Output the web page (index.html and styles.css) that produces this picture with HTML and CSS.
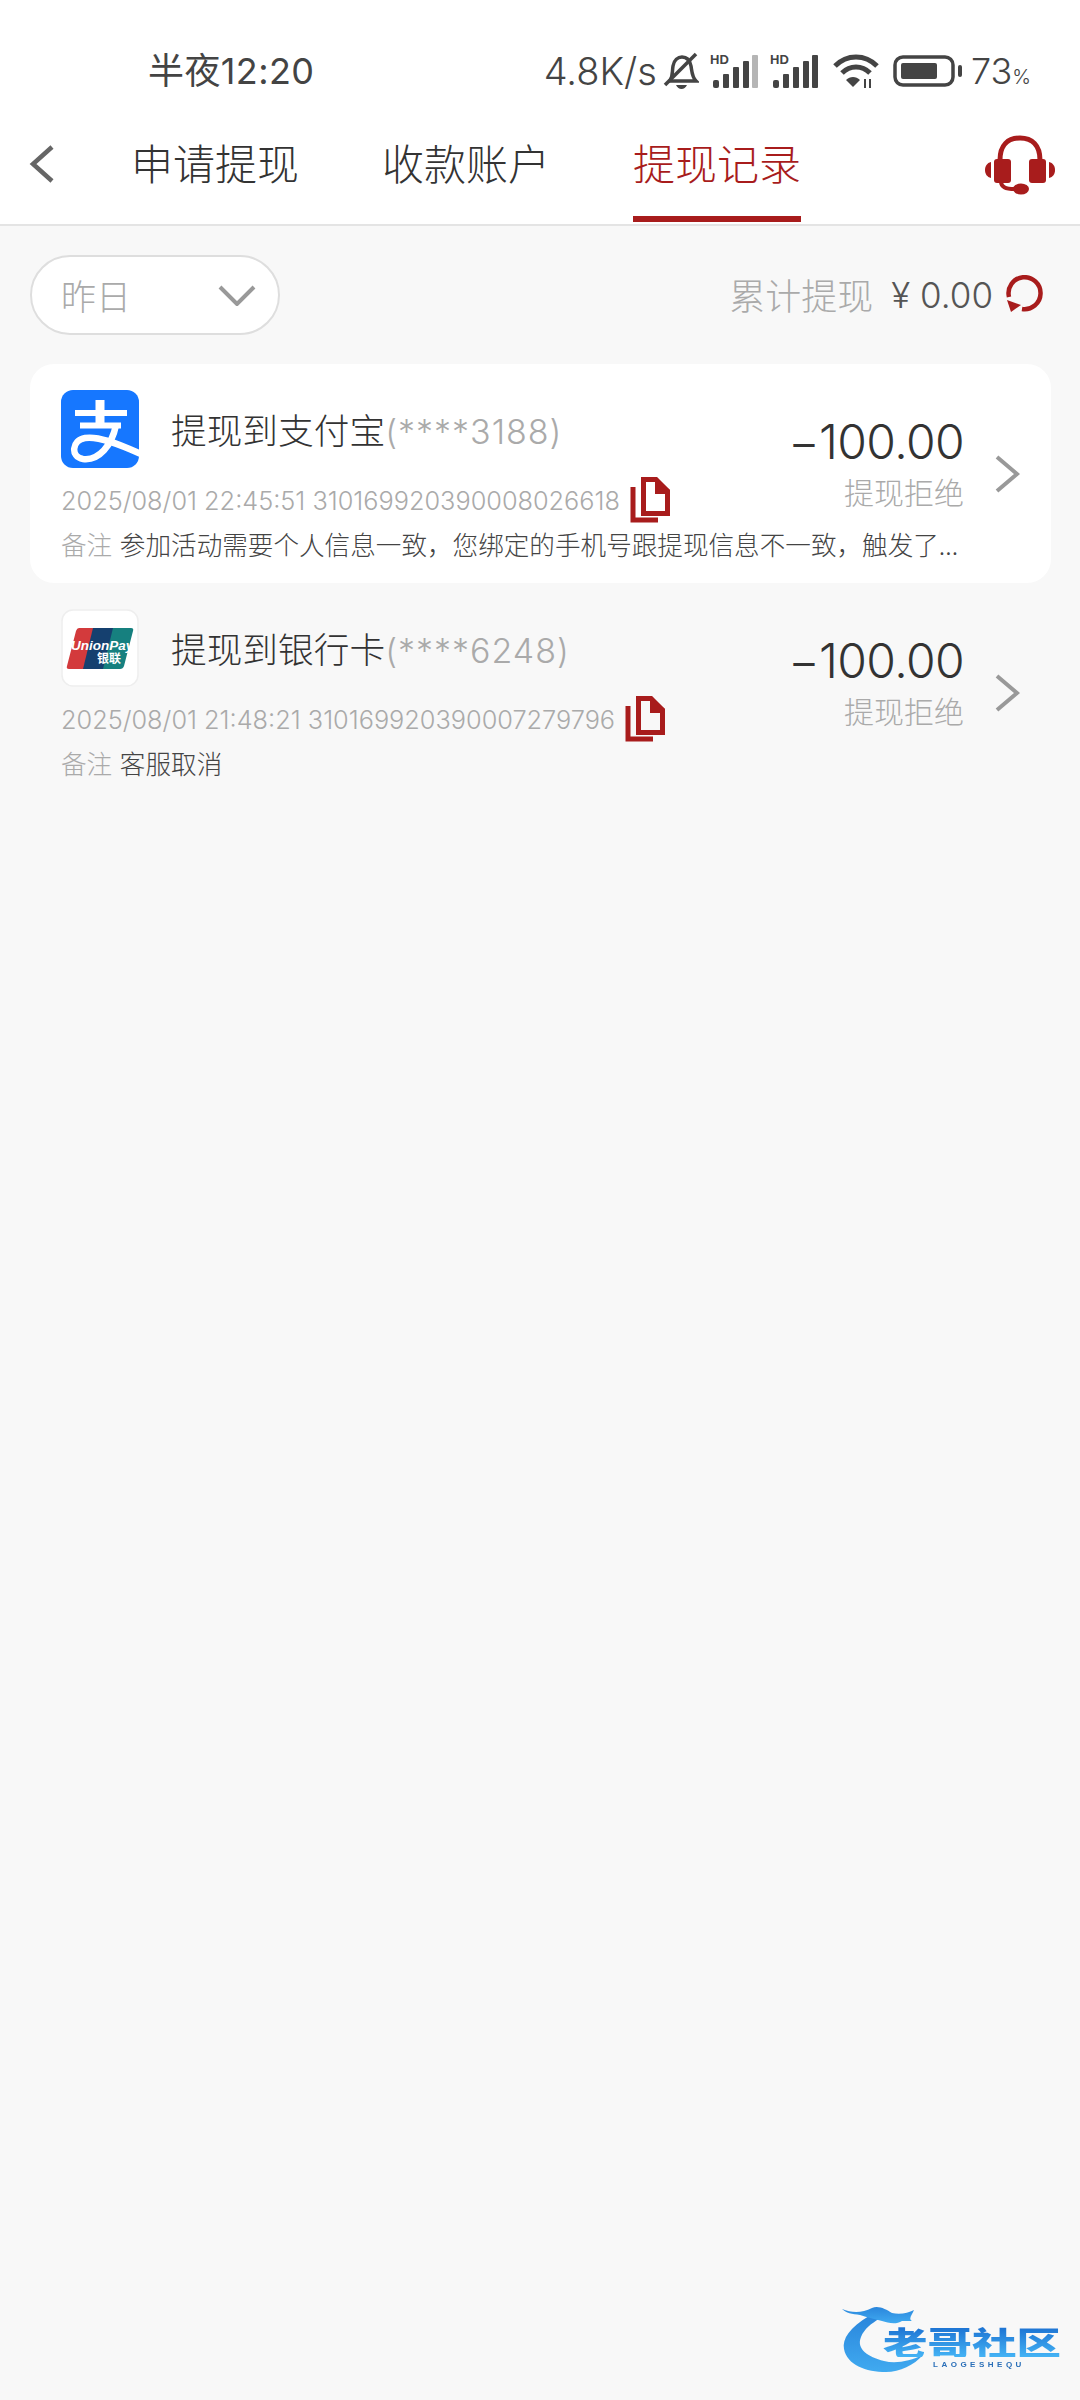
FILE: index.html
```html
<!DOCTYPE html>
<html lang="zh-CN">
<head>
<meta charset="utf-8">
<title>提现记录</title>
<link rel="stylesheet" href="styles.css">
</head>
<body>
<div class="page">
  <header class="header">
    <div class="statusbar">
      <span class="time">半夜12:20</span>
      <div class="status-right">
        <span class="speed">4.8K/s</span>
        <svg class="ic-bell" viewBox="0 0 36 38"><path class="st" d="M7 29 C10 24 9 20 10 14 C11 8 15 5 19 5 C24 5 27 9 28 14 C29 20 29 25 33 29 Z"/><path class="st" d="M2 33 L33 2"/><path class="fl" d="M13 33 H24 Q22 37 18.500 37 Q15 37 13 33Z"/></svg>
        <svg class="ic-sig" viewBox="0 0 48 36"><text class="hd" x="0" y="11">HD</text><rect class="fl" x="3" y="27" width="6" height="8" rx="2"/><rect class="fl" x="13" y="21" width="6" height="14" rx="1"/><rect class="fl" x="23" y="14" width="6" height="21" rx="1"/><rect class="fl" x="33" y="8" width="6" height="27" rx="1"/><rect class="fl-dim" x="42" y="2" width="6" height="33" rx="1"/></svg>
        <svg class="ic-sig" viewBox="0 0 48 36"><text class="hd" x="0" y="11">HD</text><rect class="fl" x="3" y="27" width="6" height="8" rx="2"/><rect class="fl" x="13" y="21" width="6" height="14" rx="1"/><rect class="fl" x="23" y="14" width="6" height="21" rx="1"/><rect class="fl" x="33" y="8" width="6" height="27" rx="1"/><rect class="fl" x="42" y="2" width="6" height="33" rx="1"/></svg>
        <svg class="ic-wifi" viewBox="0 0 46 36"><path class="st wf" d="M2 13 C14 1 32 1 44 13"/><path class="st wf" d="M9 20 C17 12 29 12 37 20"/><path class="fl" d="M16 27 C20 23 26 23 30 27 L23 34Z" transform="translate(-3 0)"/><path class="fl" d="M31 26 h2 v9 h-2z M36 26 h2 v9 h-2z"/></svg>
        <svg class="ic-batt" viewBox="0 0 70 32"><rect class="st" x="2" y="2" width="58" height="28" rx="8"/><rect class="fl" x="8" y="8" width="36" height="16" rx="2"/><rect class="fl" x="65" y="10" width="4" height="12" rx="2"/></svg>
        <span class="pct">73<small class="pct-sign">%</small></span>
      </div>
    </div>
    <nav class="tabs">
      <svg class="ic-back" viewBox="0 0 26 40"><path d="M23 3 L4 20 L23 37"/></svg>
      <a class="tab">申请提现</a>
      <a class="tab">收款账户</a>
      <a class="tab tab-on">提现记录</a>
      <svg class="ic-head" viewBox="0 0 70 60">
        <path class="hs-arc" d="M15 30 V25 C15 10 23 3 35 3 C47 3 55 10 55 25 V30"/>
        <rect class="red" x="9" y="24" width="17" height="24" rx="3"/>
        <rect class="red" x="44" y="24" width="17" height="24" rx="3"/>
        <path class="red" d="M6 27 V43 C2 42 0 39 0 35 C0 31 2 28 6 27Z"/>
        <path class="red" d="M64 27 V43 C68 42 70 39 70 35 C70 31 68 28 64 27Z"/>
        <path class="hs-mic" d="M16 46 C16 52 20 54 30 54"/>
        <ellipse class="red" cx="36" cy="54" rx="8" ry="5.500"/>
      </svg>
    </nav>
  </header>

  <main class="main">
    <div class="filter">
      <div class="pill">
        <span class="pill-text">昨日</span>
        <svg class="ic-down" viewBox="0 0 38 22"><path d="M2 3 L19 20 L36 3"/></svg>
      </div>
      <div class="total">
        <span class="total-label">累计提现</span>
        <span class="total-val">¥ 0.00</span>
        <svg class="ic-refresh" viewBox="0 0 40 40"><path d="M4 22 A16 16 0 1 1 17 34"/><path class="red ref-arrow" d="M2 25 L16 30 L6 37Z"/></svg>
      </div>
    </div>

    <article class="rec rec-white">
      <svg class="logo" viewBox="0 0 78 78">
        <rect class="ali-bg" width="78" height="78" rx="12"/>
        <clipPath id="aliclip"><rect width="78" height="78" rx="12"/></clipPath>
        <g clip-path="url(#aliclip)">
          <rect class="wh" x="14" y="20" width="52" height="6"/>
          <rect class="wh" x="34.500" y="10" width="9" height="27"/>
          <rect class="wh" x="19" y="32.500" width="41" height="6"/>
          <path class="ali-st" d="M82 65 C54 52 36 46 24 48 C11 50 9 67 22 69 C38 71 51 55 55 35"/>
        </g>
      </svg>
      <div class="rec-body">
        <div class="rec-title">提现到支付宝<span class="mask">(****3188)</span></div>
        <div class="rec-meta"><span>2025/08/01 22:45:51 310169920390008026618</span>
          <svg class="ic-copy" viewBox="0 0 40 46"><path class="cp" d="M3 10 V43 H28"/><path class="cp" d="M13.500 2.500 H26 L37.500 14 V36.500 H13.500 Z"/><path class="red" d="M25 0 L40 13 V17 H25Z"/></svg>
        </div>
        <div class="rec-note"><span class="note-k">备注</span> 参加活动需要个人信息一致，您绑定的手机号跟提现信息不一致，触发了...</div>
      </div>
      <div class="rec-side">
        <div class="amt">−100.00</div>
        <div class="state">提现拒绝</div>
      </div>
      <svg class="ic-more" viewBox="0 0 26 40"><path d="M3 3 L23 20 L3 37"/></svg>
    </article>

    <article class="rec">
      <svg class="logo logo-up" viewBox="0 0 78 78">
        <rect class="up-bg" x="1" y="1" width="76" height="76" rx="11"/>
        <path class="up-r" d="M18 19 H40 L30 60 H8 Q5 60 6 57 L15 22 Q16 19 18 19Z"/>
        <path class="up-b" d="M32 19 H59 L49 60 H22Z"/>
        <path class="up-g" d="M52 19 H70 Q73 19 72 22 L63 57 Q62 60 59 60 H42Z"/>
        <text class="up-t1" x="10" y="41">UnionPay</text>
        <text class="up-t2" x="36" y="54">银联</text>
      </svg>
      <div class="rec-body">
        <div class="rec-title">提现到银行卡<span class="mask">(****6248)</span></div>
        <div class="rec-meta"><span>2025/08/01 21:48:21 310169920390007279796</span>
          <svg class="ic-copy" viewBox="0 0 40 46"><path class="cp" d="M3 10 V43 H28"/><path class="cp" d="M13.500 2.500 H26 L37.500 14 V36.500 H13.500 Z"/><path class="red" d="M25 0 L40 13 V17 H25Z"/></svg>
        </div>
        <div class="rec-note"><span class="note-k">备注</span> 客服取消</div>
      </div>
      <div class="rec-side">
        <div class="amt">−100.00</div>
        <div class="state">提现拒绝</div>
      </div>
      <svg class="ic-more" viewBox="0 0 26 40"><path d="M3 3 L23 20 L3 37"/></svg>
    </article>
  </main>

  <div class="mark">
    <svg class="mark-drag" viewBox="0 0 110 70">
      <defs><linearGradient id="dg" x1="0" y1="0" x2="0" y2="1"><stop offset="0" stop-color="#2a86dc"/><stop offset="1" stop-color="#40aaf0"/></linearGradient></defs>
      <path fill="url(#dg)" d="M27 11 C8 22 0 34 2 44 C5 60 24 67 44 67 C58 67 72 60 81 50 C68 56 54 59 42 56 C26 52 14 44 19 32 C22 24 30 18 37 14Z"/>
      <path fill="url(#dg)" d="M0 4 C10 8 20 8 30 3 C36 0 44 4 50 8 C58 10 66 8 72 5 C70 10 66 14 70 16 L60 16 C54 20 46 18 40 16 C32 14 24 12 18 10 C10 9 4 8 0 4Z"/>
    </svg>
    <div class="mark-text">
      <div class="mark-cn">老哥社区</div>
      <div class="mark-en">LAOGESHEQU</div>
    </div>
  </div>
</div>
</body>
</html>
```

FILE: styles.css
```css
* { box-sizing: border-box; }
html, body { margin: 0; padding: 0; }
body {
  background: #f8f8f8;
  font-family: "Inter", "Noto Sans CJK SC", sans-serif;
  color: #333;
}
.page { position: relative; width: 1080px; height: 2400px; overflow: hidden; }

/* header */
.header { background: #fff; border-bottom: 2px solid #e4e4e4; height: 226px; }
.statusbar { display: flex; align-items: center; height: 112px; padding: 30px 49px 0 148px; color: #444; }
.time { font-size: 36px; line-height: 1; letter-spacing: 0.4px; }
.status-right { margin-left: auto; display: flex; align-items: center; }
.speed { font-size: 38px; line-height: 1; margin-right: 6px; font-weight: 300; }
.st { fill: none; stroke: #444; stroke-width: 3.500; }
.fl { fill: #444; }
.fl-dim { fill: #b5b5b5; }
.wf { stroke-width: 5; }
.hd { font: 700 13px "Liberation Sans", sans-serif; fill: #444; }
.ic-bell { width: 36px; height: 38px; margin-right: 11px; }
.ic-sig { width: 48px; height: 36px; margin-right: 12px; }
.ic-wifi { width: 46px; height: 36px; margin: 0 14px 0 3px; }
.ic-batt { width: 70px; height: 32px; margin-right: 8px; }
.pct { font-size: 36px; line-height: 1; font-weight: 300; }
.pct-sign { font-size: 20px; }

.tabs { display: flex; height: 112px; align-items: stretch; padding-left: 29px; position: relative; }
.ic-back { width: 26px; height: 40px; align-self: center; margin: -8px 76px 0 0; fill: none; stroke: #666; stroke-width: 4.500; }
.tab { font-size: 42px; line-height: 100px; width: 168px; margin-right: 83px; text-align: center; font-family: "Noto Sans CJK SC", sans-serif; font-weight: 300; color: #333; height: 110px; }
.tab-on { color: #a81c1c; border-bottom: 6px solid #a81c1c; margin-right: 0; height: 110px; }
.ic-head { width: 70px; height: 60px; margin: 23px 25px 0 auto; }
.red { fill: #a81c1c; }
.hs-arc { fill: none; stroke: #a81c1c; stroke-width: 5; }
.hs-mic { fill: none; stroke: #a81c1c; stroke-width: 4; }

/* filter */
.main { padding: 29px 29px 0 30px; }
.filter { display: flex; align-items: center; justify-content: space-between; height: 80px; }
.pill { width: 250px; height: 80px; background: #fff; border: 2px solid #dedede; border-radius: 40px; display: flex; align-items: center; padding: 0 22px 0 29px; }
.pill-text { font-size: 35px; color: #aaa; font-family: "Noto Sans CJK SC", sans-serif; font-weight: 300; position: relative; top: -1px; }
.ic-down { width: 38px; height: 22px; margin-left: auto; fill: none; stroke: #999; stroke-width: 4; }
.total { display: flex; align-items: center; margin-right: 6px; }
.total-label { font-size: 36px; color: #aaa; font-family: "Noto Sans CJK SC", sans-serif; font-weight: 300; margin-right: 18px; position: relative; top: -1px; }
.total-val { font-size: 35px; color: #555; font-weight: 300; }
.ic-refresh { width: 40px; height: 40px; margin-left: 12px; fill: none; stroke: #a81c1c; stroke-width: 4.500; }
.ref-arrow { stroke: none; }

/* records */
.rec { display: flex; height: 219px; margin-top: 0; padding: 26px 31px 0 31px; border-radius: 24px; position: relative; }
.rec-white { background: #fff; margin-top: 29px; }
.logo { width: 78px; height: 78px; flex: none; margin-right: 32px; }
.ali-bg { fill: #1677ff; }
.wh { fill: #fff; }
.ali-st { fill: none; stroke: #fff; stroke-width: 6.500; }
.up-bg { fill: #fff; stroke: #eee; stroke-width: 1.500; }
.up-r { fill: #d33a3c; }
.up-b { fill: #15406f; }
.up-g { fill: #16807f; }
.up-t1 { font: italic 700 13.500px "Liberation Sans", sans-serif; fill: #fff; }
.up-t2 { font: 700 12px "Noto Sans CJK SC", sans-serif; fill: #fff; }
.rec-body { flex: 1; min-width: 0; }
.rec-title { font-size: 35.700px; line-height: 50px; margin-top: 14px; font-family: "Noto Sans CJK SC", sans-serif; font-weight: 300; color: #333; white-space: nowrap; }
.mask { color: #aaa; font-family: "Inter", sans-serif; font-weight: 300; font-size: 34px; letter-spacing: 1px; }
.rec-meta { position: absolute; left: 31px; top: 114px; display: flex; align-items: center; font-size: 25.300px; line-height: 46px; color: #aaa; font-weight: 300; white-space: nowrap; }
.rec-note { position: absolute; left: 31px; top: 162px; font-size: 25.600px; line-height: 36px; color: #444; font-family: "Noto Sans CJK SC", sans-serif; font-weight: 300; white-space: nowrap; }
.note-k { color: #aaa; margin-right: 2px; }
.ic-copy { width: 40px; height: 46px; margin-left: 10px; margin-top: -3px; }
.cp { fill: none; stroke: #a81c1c; stroke-width: 5; }
.rec-side { text-align: right; width: 190px; margin-right: 30px; margin-top: 23px; }
.amt { font-size: 48px; line-height: 57px; font-weight: 300; color: #333; letter-spacing: -0.6px; }
.state { font-size: 30px; line-height: 42px; color: #aaa; font-family: "Noto Sans CJK SC", sans-serif; font-weight: 300; }
.ic-more { width: 26px; height: 40px; flex: none; margin-top: 64px; fill: none; stroke: #999; stroke-width: 4; }

/* watermark */
.mark { position: absolute; left: 842px; top: 2305px; width: 222px; height: 72px; filter: blur(0.7px); }
.mark-drag { position: absolute; left: 0; top: 0; width: 110px; height: 70px; }
.mark-text { position: absolute; left: 41px; top: 20px; width: 181px; }
.mark-cn { font: 900 38px/38px "Noto Sans CJK SC", sans-serif; background: linear-gradient(#1a6ed0, #45b4f5); -webkit-background-clip: text; background-clip: text; color: transparent; white-space: nowrap; transform: scale(1.17, 0.85); transform-origin: left top; }
.mark-en { font: 600 8px/10px "Liberation Sans", sans-serif; letter-spacing: 3.500px; color: #2a6fb8; margin: -3px 0 0 50px; white-space: nowrap; }
```
